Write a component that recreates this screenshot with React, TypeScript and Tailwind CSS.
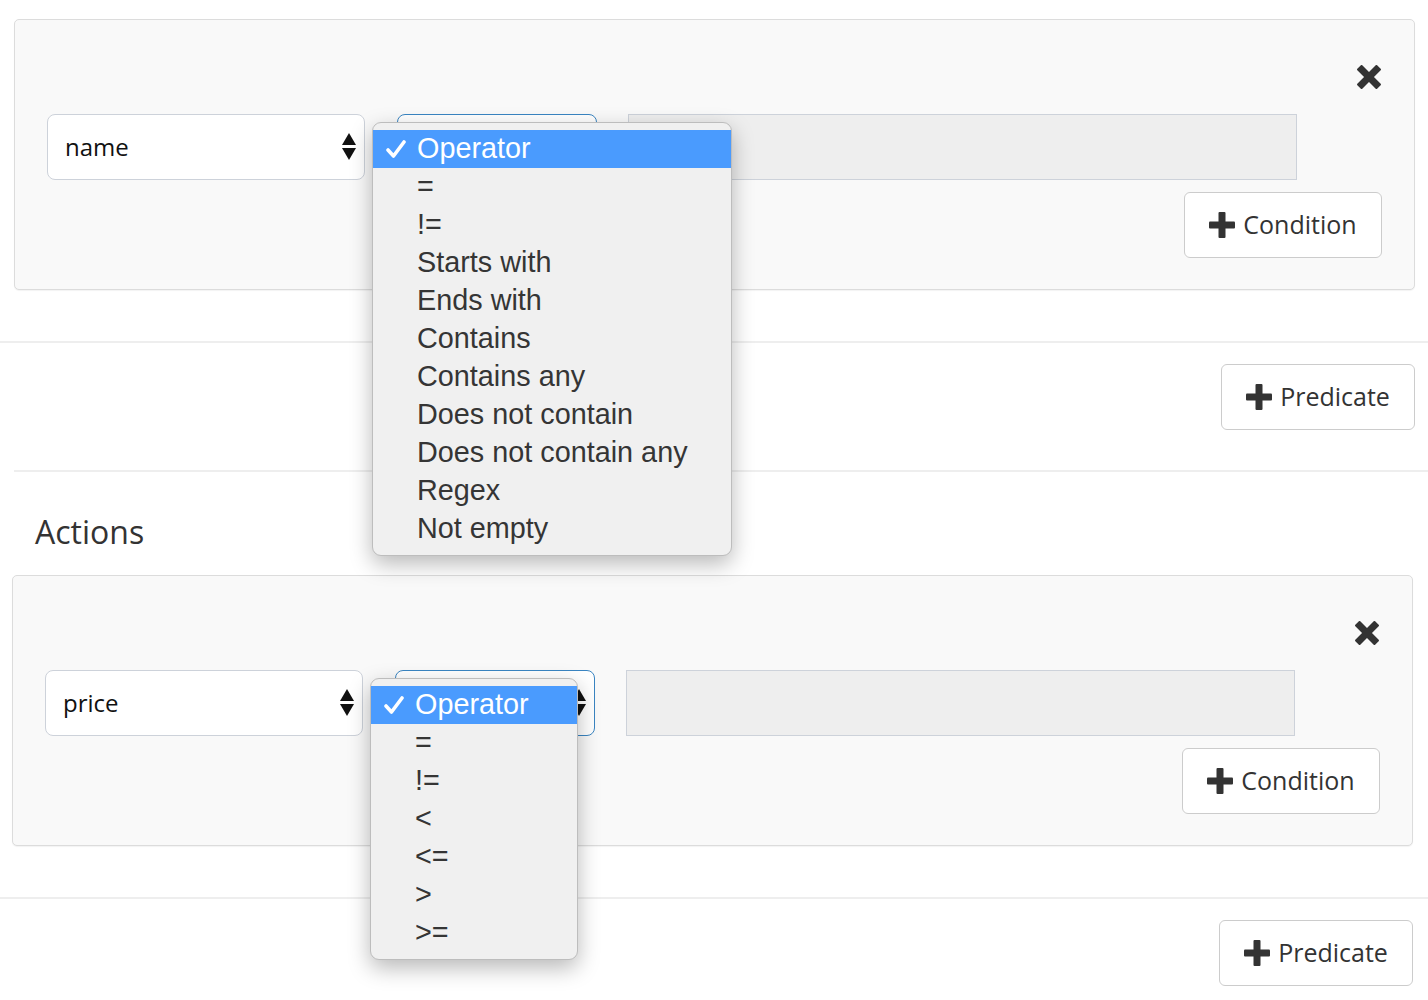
import React from 'react';

const openSans = { fontFamily: '"Open Sans", "Liberation Sans", sans-serif' };
const menuFont = { fontFamily: '"Liberation Sans", Arial, sans-serif' };

const Arrows: React.FC = () => (
  <svg width="14" height="28" viewBox="0 0 14 28" className="shrink-0">
    <path d="M7 0 L14 12 L0 12 Z" fill="#111" />
    <path d="M0 15 L14 15 L7 27 Z" fill="#111" />
  </svg>
);

const PlusIcon: React.FC = () => (
  <svg width="26" height="26" viewBox="0 0 26 26" className="shrink-0">
    <rect x="9.5" y="0" width="7" height="26" rx="1" fill="#333" />
    <rect x="0" y="9.5" width="26" height="7" rx="1" fill="#333" />
  </svg>
);

const CloseIcon: React.FC = () => (
  <svg width="24" height="24" viewBox="0 0 24 24">
    <g transform="rotate(45 12 12)" fill="#333">
      <rect x="8.5" y="-2" width="7" height="28" rx="1" />
      <rect x="-2" y="8.5" width="28" height="7" rx="1" />
    </g>
  </svg>
);

const Check: React.FC = () => (
  <svg width="20" height="20" viewBox="0 0 20 20" className="shrink-0">
    <path d="M2 11 L7.5 17 L18 3" stroke="#fff" strokeWidth="3.6" fill="none" strokeLinecap="round" strokeLinejoin="round" />
  </svg>
);

const OperatorMenu: React.FC<{ items: string[]; width: string }> = ({ items, width }) => (
  <div
    className={`absolute left-[-25px] top-[8px] z-10 ${width} rounded-[9px] border border-[#bdbdbd] bg-[#f0f0f0] py-[7px] shadow-[0_8px_22px_rgba(0,0,0,0.28)]`}
    style={menuFont}
  >
    <div className="flex h-[38px] items-center bg-[#4a9bfe] text-[28.8px] text-white">
      <div className="flex w-[44px] justify-center pl-[1px]">
        <Check />
      </div>
      <span>Operator</span>
    </div>
    {items.map(it => (
      <div key={it} className="flex h-[38px] items-center pl-[44px] text-[28.8px] text-[#353535]">
        {it}
      </div>
    ))}
  </div>
);

const ConditionPanel: React.FC<{ field: string; items: string[]; menuWidth: string }> = ({ field, items, menuWidth }) => (
  <div className="rounded-[5px] border border-[#dcdcdc] bg-[#f9f9f9] px-8 pt-[45px] pb-[31px] shadow-[0_1px_1px_rgba(0,0,0,0.05)]">
    <div className="flex h-[24px] justify-end pr-[1px]">
      <CloseIcon />
    </div>
    <div className="mt-[25px] flex h-[66px] items-stretch">
      <div className="flex w-[318px] items-center justify-between rounded-[8px] border-[1.5px] border-[#cdd2da] bg-white pl-[17px] pr-[8px] text-[24px] text-[#111]" style={openSans}>
        <span>{field}</span>
        <Arrows />
      </div>
      <div className="relative ml-[32px] w-[200px]">
        <div className="flex h-full items-center justify-end rounded-[8px] border-[1.5px] border-[#3a85c2] bg-white pr-[8px]">
          <Arrows />
        </div>
        <OperatorMenu items={items} width={menuWidth} />
      </div>
      <div className="ml-[31px] w-[669px] border-[1.5px] border-[#cdd2da] bg-[#eeeeee]" />
    </div>
    <div className="mt-[12px] flex justify-end">
      <button className="flex h-[66px] w-[198px] items-center justify-center gap-[8px] rounded-[6px] border-[1.5px] border-[#cccccc] bg-white text-[25px] text-[#333]" style={openSans}>
        <PlusIcon />
        <span>Condition</span>
      </button>
    </div>
  </div>
);

const PredicateButton: React.FC = () => (
  <button className="flex h-[66px] w-[194px] items-center justify-center gap-[8px] rounded-[6px] border-[1.5px] border-[#cccccc] bg-white text-[25px] text-[#333]" style={openSans}>
    <PlusIcon />
    <span>Predicate</span>
  </button>
);

const textOps = ['=', '!=', 'Starts with', 'Ends with', 'Contains', 'Contains any', 'Does not contain', 'Does not contain any', 'Regex', 'Not empty'];
const numOps = ['=', '!=', '<', '<=', '>', '>='];

export default function App() {
  return (
    <div className="h-[1000px] w-[1428px] overflow-hidden bg-white" style={openSans}>
      <div className="pt-[19px] pl-[14px] pr-[13px]">
        <ConditionPanel field="name" items={textOps} menuWidth="w-[360px]" />
      </div>
      <div className="mt-[51px] h-[2px] bg-[#eeeeee]" />
      <div className="flex justify-end pt-[21px] pr-[13px]">
        <PredicateButton />
      </div>
      <div className="ml-[14px] mt-[40px] h-[2px] bg-[#eeeeee]" />
      <h2 className="pl-[35px] pt-[42px] text-[32px] leading-[36px] text-[#333]">Actions</h2>
      <div className="pt-[25px] pl-[12px] pr-[15px]">
        <ConditionPanel field="price" items={numOps} menuWidth="w-[208px]" />
      </div>
      <div className="mt-[51px] h-[2px] bg-[#eeeeee]" />
      <div className="flex justify-end pt-[21px] pr-[15px]">
        <PredicateButton />
      </div>
    </div>
  );
}
